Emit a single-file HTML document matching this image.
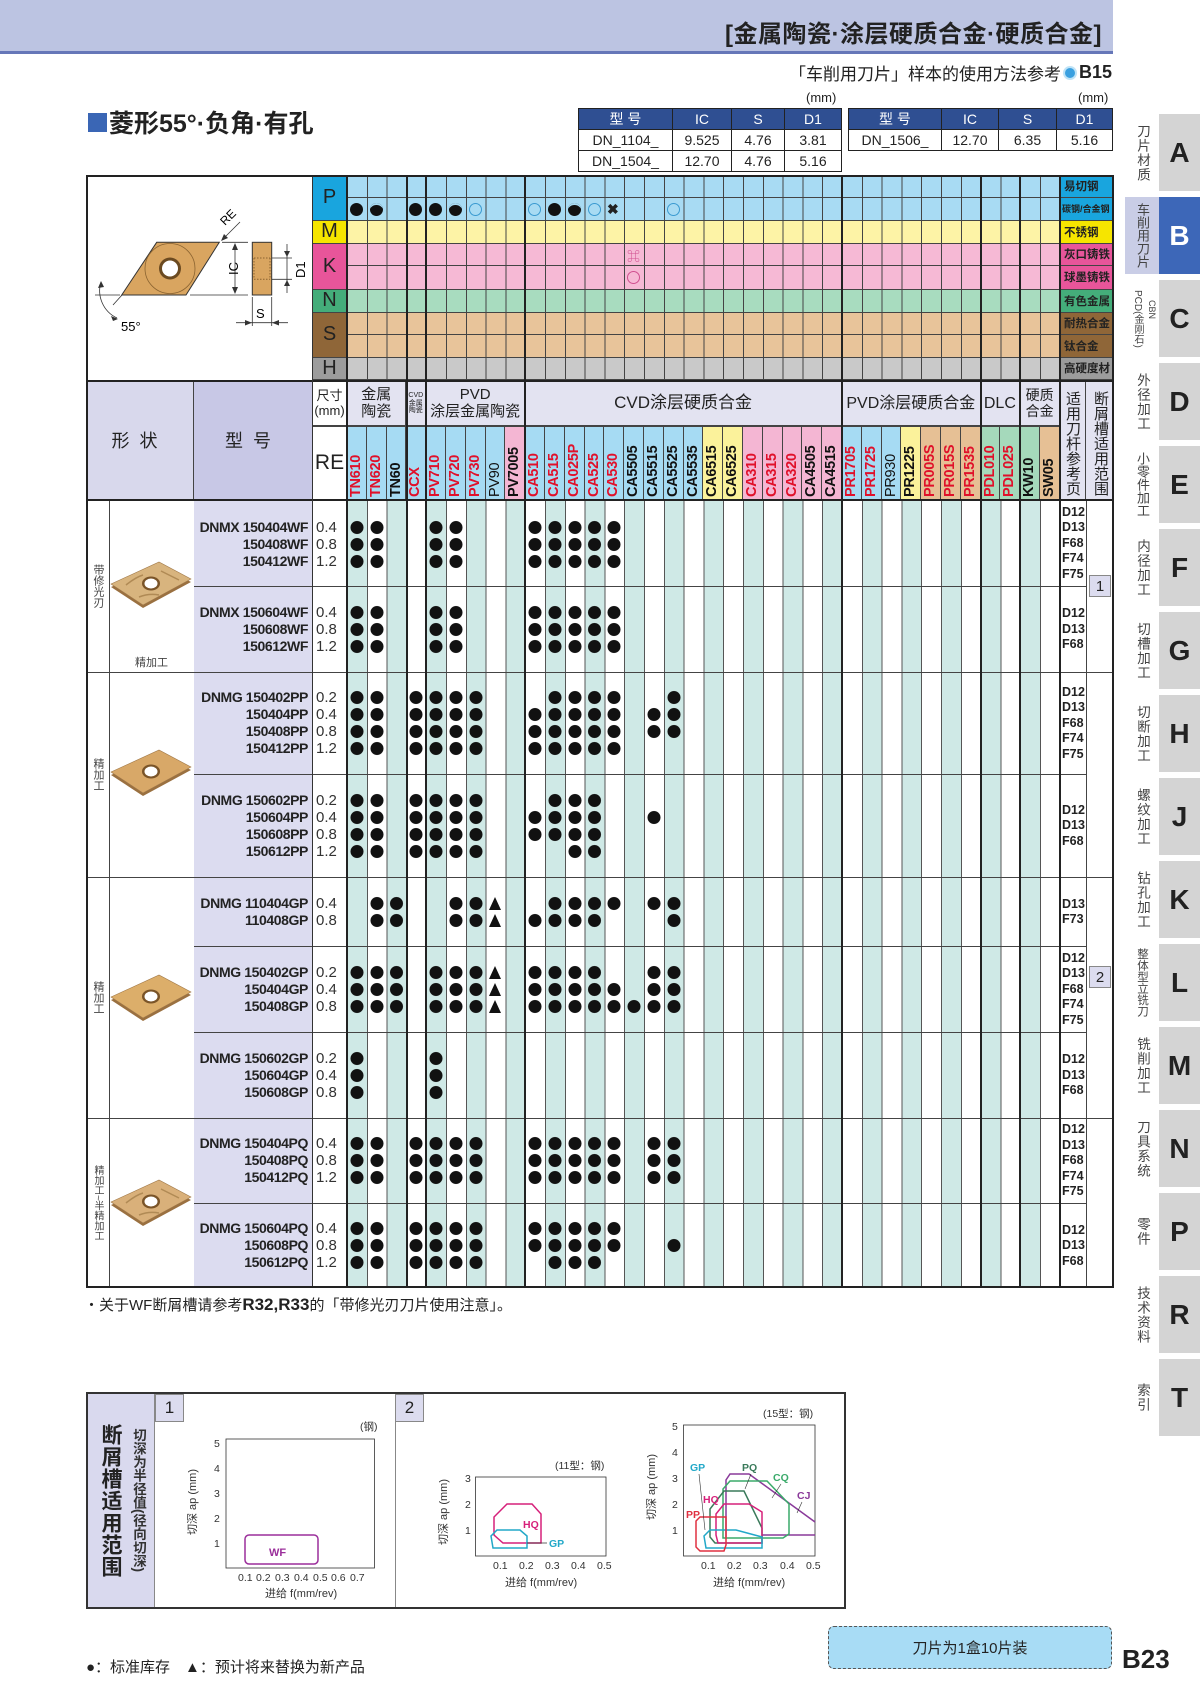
<!DOCTYPE html>
<html><head><meta charset="utf-8">
<style>
*{margin:0;padding:0;box-sizing:border-box}
body{width:1200px;height:1697px;background:#fff;font-family:"Liberation Sans","Noto Sans CJK SC",sans-serif;color:#222;position:relative;overflow:hidden}
.a{position:absolute}
.band{left:0;top:0;width:1113px;height:54px;background:#bcc4e2;border-bottom:3px solid #6677b8}
.dt{border-collapse:collapse;font-size:14px;text-align:center;font-family:"Liberation Sans Narrow","Liberation Sans","Noto Sans CJK SC",sans-serif}
.dt td,.dt th{border:1px solid #222;height:21px;padding:0}
.dt th{background:#2f4f92;color:#fff;font-weight:normal}
.mr{left:347px;width:713px;border-bottom:1px solid #444;background-image:repeating-linear-gradient(90deg,#444 0 1px,transparent 1px 19.8px)}
.ml{left:1060px;width:54px;font-size:11.5px;font-weight:bold;padding-left:4px;display:flex;align-items:center;border-bottom:1px solid #444}
.ll{left:313px;width:34px;font-size:20px;display:flex;align-items:center;justify-content:center;border-bottom:1px solid #444;border-right:1px solid #222}
.vl{width:2px;background:#222}
.nm{top:426px;height:74px;width:19.8px;border-right:1px solid #444;overflow:hidden}
.nm span{position:absolute;left:0;top:71px;width:68px;height:19.8px;line-height:19.8px;transform-origin:0 0;transform:rotate(-90deg);white-space:nowrap;font-weight:bold;font-size:14.5px;letter-spacing:-0.3px}
.r span{color:#e0102a}.k span{color:#111}
.gh{top:382px;height:44px;background:#e3e3f1;border-right:1px solid #444;border-bottom:1px solid #444;display:flex;align-items:center;justify-content:center;text-align:center;line-height:1.1}
.blk{position:absolute;left:194px;display:flex}
.mdl{width:114px;text-align:right;font-weight:bold;font-size:14px;line-height:17px;letter-spacing:-0.4px}
.re{width:39px;padding-left:8px;font-size:15px;line-height:17px;color:#333}
.dots{display:flex;flex-direction:column}
.dots div{display:flex;height:17px}
.dots b,.dots u,.dots s{display:block;width:19.8px;height:17px;text-decoration:none}
.dots b{background:radial-gradient(circle at 50% 50%,#111 6.2px,transparent 6.8px)}
.dots s{position:relative}
.dots s:after{content:"";position:absolute;left:3.5px;top:2px;border-left:6.5px solid transparent;border-right:6.5px solid transparent;border-bottom:13px solid #111}
.ref{left:1060px;width:26px;font-weight:bold;font-size:12.5px;line-height:15.5px;display:flex;flex-direction:column;justify-content:center;text-align:left;padding-left:2px}
.hl{height:1px;background:#444}
.tab{left:1159px;width:41px;height:77px;background:#d4d4d4;font-weight:bold;font-size:28px;display:flex;align-items:center;justify-content:center}
.tt{left:1125px;width:34px;height:77px;writing-mode:vertical-rl;font-size:13.5px;color:#444;text-align:center;line-height:34px;letter-spacing:1px;white-space:nowrap}
.sl{left:86px;width:23px;writing-mode:vertical-rl;font-size:11px;color:#444;text-align:center;line-height:23px;white-space:nowrap}
.pi{width:13px;height:13px;border-radius:50%;top:203px}
.cb{width:22px;height:22px;background:#dcdcef;border:1px solid #888;font-size:15px;display:flex;align-items:center;justify-content:center}
.vh{top:382px;height:118px;background:#e3e3f1;writing-mode:vertical-rl;font-size:15px;line-height:1;text-align:center;white-space:nowrap;padding-right:5px}
svg text{font-family:"Liberation Sans","Noto Sans CJK SC",sans-serif}
</style></head><body>

<div class="a band"></div>
<div class="a" style="right:98px;top:14px;font-size:24px;font-weight:bold;color:#222;letter-spacing:0.5px">[金属陶瓷·涂层硬质合金·硬质合金]</div>
<div class="a" style="right:88px;top:60px;font-size:17px;display:flex;align-items:center">「车削用刀片」样本的使用方法参考<span style="display:inline-block;width:14px;height:14px;border-radius:50%;background:#3aa0e0;border:2px solid #bfe3f7;margin:0 2px"></span><b style="font-size:18px">B15</b></div>

<div class="a" style="left:88px;top:104px;font-size:25px;font-weight:bold;display:flex;align-items:center"><span style="display:inline-block;width:19px;height:19px;background:#3a66b5;margin-right:2px"></span>菱形55°·负角·有孔</div>

<div class="a" style="left:806px;top:90px;font-size:13px">(mm)</div>
<div class="a" style="left:1078px;top:90px;font-size:13px">(mm)</div>
<table class="a dt" style="left:578px;top:108px;width:264px">
<tr><th style="width:94px">型 号</th><th style="width:59px">IC</th><th style="width:53px">S</th><th>D1</th></tr>
<tr><td>DN_1104_</td><td>9.525</td><td>4.76</td><td>3.81</td></tr>
<tr><td>DN_1504_</td><td>12.70</td><td>4.76</td><td>5.16</td></tr>
</table>
<table class="a dt" style="left:848px;top:108px;width:265px">
<tr><th style="width:93px">型 号</th><th style="width:57px">IC</th><th style="width:58px">S</th><th>D1</th></tr>
<tr><td>DN_1506_</td><td>12.70</td><td>6.35</td><td>5.16</td></tr>
</table>

<!-- drawing -->
<svg class="a" style="left:86px;top:175px" width="227" height="205" viewBox="86 175 227 205">
<polygon points="121.7,295 156.7,242.3 219.3,242.3 186,295" fill="#d9a560" stroke="#333" stroke-width="1"/>
<circle cx="170" cy="268.5" r="25" fill="none" stroke="#8a6330" stroke-width="0.8"/>
<circle cx="170" cy="268.5" r="11" fill="#6b4a20"/>
<circle cx="170" cy="268.5" r="8" fill="#fff"/>
<line x1="222" y1="242.3" x2="248" y2="242.3" stroke="#333" stroke-width="0.8"/>
<line x1="190" y1="295" x2="248" y2="295" stroke="#333" stroke-width="0.8"/>
<line x1="235" y1="244" x2="235" y2="293" stroke="#333" stroke-width="0.8"/>
<polygon points="235,243 232,250 238,250" fill="#333"/><polygon points="235,294 232,287 238,287" fill="#333"/>
<text x="0" y="0" font-size="13" transform="translate(238,275) rotate(-90)">IC</text>
<line x1="222" y1="240" x2="240" y2="222" stroke="#333" stroke-width="0.8"/>
<polygon points="221,241 224,234 228,238" fill="#333"/>
<text font-size="12" transform="translate(225,226) rotate(-45)">RE</text>
<rect x="252.3" y="242.3" width="19.4" height="52.7" fill="#d9a560" stroke="#333" stroke-width="1"/>
<line x1="254" y1="258" x2="270" y2="258" stroke="#8a6330" stroke-dasharray="1.5,1.5"/>
<line x1="254" y1="279.3" x2="270" y2="279.3" stroke="#8a6330" stroke-dasharray="1.5,1.5"/>
<line x1="254" y1="258" x2="254" y2="279" stroke="#8a6330" stroke-dasharray="1.5,1.5"/>
<line x1="270" y1="258" x2="270" y2="279" stroke="#8a6330" stroke-dasharray="1.5,1.5"/>
<line x1="272" y1="258" x2="292" y2="258" stroke="#333" stroke-width="0.8"/>
<line x1="272" y1="279.3" x2="292" y2="279.3" stroke="#333" stroke-width="0.8"/>
<line x1="287" y1="244" x2="287" y2="293" stroke="#333" stroke-width="0.8"/>
<polygon points="287,257 284,251 290,251" fill="#333"/><polygon points="287,280 284,286 290,286" fill="#333"/>
<text font-size="13" transform="translate(305,278) rotate(-90)">D1</text>
<line x1="252.3" y1="297" x2="252.3" y2="326" stroke="#333" stroke-width="0.8"/>
<line x1="271.7" y1="297" x2="271.7" y2="326" stroke="#333" stroke-width="0.8"/>
<line x1="236" y1="322.7" x2="288" y2="322.7" stroke="#333" stroke-width="0.8"/>
<polygon points="252,322.7 245,320 245,325.5" fill="#333"/><polygon points="272,322.7 279,320 279,325.5" fill="#333"/>
<text x="256" y="318" font-size="13">S</text>
<line x1="95" y1="295" x2="120" y2="295" stroke="#333" stroke-width="0.8"/>
<path d="M101,282 A30,30 0 0 0 117,318" fill="none" stroke="#333" stroke-width="0.8"/>
<line x1="113" y1="305" x2="122" y2="295" stroke="#333" stroke-width="0.8"/>
<polygon points="101,281 98,288 104,287" fill="#333"/><polygon points="118,319 111,316 113,321" fill="#333"/>
<text x="121" y="331" font-size="13">55°</text>
</svg>

<!-- material rows -->
<div class="a mr" style="top:175px;height:22.5px;background-color:#a8dbf3"></div>
<div class="a mr" style="top:197.5px;height:23px;background-color:#a8dbf3"></div>
<div class="a mr" style="top:220.5px;height:23px;background-color:#fdf3a6"></div>
<div class="a mr" style="top:243.5px;height:22.5px;background-color:#f6b9d5"></div>
<div class="a mr" style="top:266px;height:23.5px;background-color:#f6b9d5"></div>
<div class="a mr" style="top:289.5px;height:23px;background-color:#a8dcbf"></div>
<div class="a mr" style="top:312.5px;height:22.5px;background-color:#e8c49a"></div>
<div class="a mr" style="top:335px;height:22.5px;background-color:#e8c49a"></div>
<div class="a mr" style="top:357.5px;height:22.5px;background-color:#c9c9c9"></div>

<div class="a ml" style="top:175px;height:22.5px;background:#19a5de">易切钢</div>
<div class="a ml" style="top:197.5px;height:23px;background:#19a5de;font-size:9px;padding-left:2px">碳钢/合金钢</div>
<div class="a ml" style="top:220.5px;height:23px;background:#f6e500">不锈钢</div>
<div class="a ml" style="top:243.5px;height:22.5px;background:#e8559a">灰口铸铁</div>
<div class="a ml" style="top:266px;height:23.5px;background:#e8559a">球墨铸铁</div>
<div class="a ml" style="top:289.5px;height:23px;background:#44ad7a">有色金属</div>
<div class="a ml" style="top:312.5px;height:22.5px;background:#8f6638">耐热合金</div>
<div class="a ml" style="top:335px;height:22.5px;background:#8f6638">钛合金</div>
<div class="a ml" style="top:357.5px;height:22.5px;background:#9c9c9c">高硬度材</div>

<div class="a ll" style="top:175px;height:45.5px;background:#19a5de">P</div>
<div class="a ll" style="top:220.5px;height:23px;background:#f6e500">M</div>
<div class="a ll" style="top:243.5px;height:46px;background:#e8559a">K</div>
<div class="a ll" style="top:289.5px;height:23px;background:#44ad7a">N</div>
<div class="a ll" style="top:312.5px;height:45px;background:#8f6638">S</div>
<div class="a ll" style="top:357.5px;height:22.5px;background:#9c9c9c">H</div>

<!-- P row icons -->
<div class="a pi" style="left:350px;background:#111"></div>
<div class="a pi" style="left:370px;background:#111;box-shadow:inset 0 3px 0 -1px #a8dbf3"></div>
<div class="a pi" style="left:409px;background:#111"></div>
<div class="a pi" style="left:429px;background:#111"></div>
<div class="a pi" style="left:449px;background:#111;box-shadow:inset 0 3px 0 -1px #a8dbf3"></div>
<div class="a pi" style="left:469px;border:1px solid #3a9ad0"></div>
<div class="a pi" style="left:528px;border:1px solid #3a9ad0"></div>
<div class="a pi" style="left:548px;background:#111"></div>
<div class="a pi" style="left:568px;background:#111;box-shadow:inset 0 3px 0 -1px #a8dbf3"></div>
<div class="a pi" style="left:588px;border:1px solid #3a9ad0"></div>
<div class="a" style="left:607px;top:201px;font-size:14px;font-weight:bold">✖</div>
<div class="a pi" style="left:667px;border:1px solid #3a9ad0"></div>
<div class="a" style="left:627px;top:246px;font-size:13px;color:#d05090">⌘</div>
<div class="a pi" style="left:627px;top:271px;border:1px solid #d05090"></div>

<!-- lower header -->
<div class="a" style="left:86px;top:380px;width:108px;height:120px;background:#d8d8ec;border-right:1px solid #444;display:flex;align-items:center;justify-content:center;font-size:18px;letter-spacing:10px">形状</div>
<div class="a" style="left:194px;top:380px;width:119px;height:120px;background:#c8c8e6;border-right:1px solid #444;display:flex;align-items:center;justify-content:center;font-size:18px;letter-spacing:10px">型号</div>
<div class="a gh" style="left:313px;width:34px;font-size:13px;background:#fff">尺寸<br>(mm)</div>
<div class="a" style="left:313px;top:426px;width:34px;height:74px;border-right:1px solid #444;display:flex;align-items:center;justify-content:center;font-size:21px">RE</div>
<div class="a gh" style="left:347px;width:59.4px;font-size:15px">金属<br>陶瓷</div>
<div class="a gh" style="left:406.4px;width:19.8px;font-size:7px">CVD<br>金属<br>陶瓷</div>
<div class="a gh" style="left:426.2px;width:99px;font-size:15px">PVD<br>涂层金属陶瓷</div>
<div class="a gh" style="left:525.2px;width:316.8px;font-size:17px">CVD涂层硬质合金</div>
<div class="a gh" style="left:842px;width:138.6px;font-size:16px">PVD涂层硬质合金</div>
<div class="a gh" style="left:980.6px;width:39.6px;font-size:16px">DLC</div>
<div class="a gh" style="left:1020.2px;width:39.8px;font-size:14px">硬质<br>合金</div>
<div class="a vh" style="left:1060px;width:26px;border-right:1px solid #444;padding-top:5px">适用刀杆参考页</div>
<div class="a vh" style="left:1086px;width:28px;padding-top:5px;padding-right:6px">断屑槽适用范围</div>

<div class="a nm r" style="left:347px;background:#a6dbf3"><span>TN610</span></div>
<div class="a nm r" style="left:366.8px;background:#a6dbf3"><span>TN620</span></div>
<div class="a nm k" style="left:386.6px;background:#a6dbf3"><span>TN60</span></div>
<div class="a nm r" style="left:406.4px;background:#a6dbf3"><span>CCX</span></div>
<div class="a nm r" style="left:426.2px;background:#a6dbf3"><span>PV710</span></div>
<div class="a nm r" style="left:446px;background:#a6dbf3"><span>PV720</span></div>
<div class="a nm r" style="left:465.8px;background:#a6dbf3"><span>PV730</span></div>
<div class="a nm k" style="left:485.6px;background:#a6dbf3"><span style="font-weight:normal">PV90</span></div>
<div class="a nm k" style="left:505.4px;background:#f4b6d3"><span>PV7005</span></div>
<div class="a nm r" style="left:525.2px;background:#a6dbf3"><span>CA510</span></div>
<div class="a nm r" style="left:545px;background:#a6dbf3"><span>CA515</span></div>
<div class="a nm r" style="left:564.8px;background:#a6dbf3"><span>CA025P</span></div>
<div class="a nm r" style="left:584.6px;background:#a6dbf3"><span>CA525</span></div>
<div class="a nm r" style="left:604.4px;background:#a6dbf3"><span>CA530</span></div>
<div class="a nm k" style="left:624.2px;background:#a6dbf3"><span>CA5505</span></div>
<div class="a nm k" style="left:644px;background:#a6dbf3"><span>CA5515</span></div>
<div class="a nm k" style="left:663.8px;background:#a6dbf3"><span>CA5525</span></div>
<div class="a nm k" style="left:683.6px;background:#a6dbf3"><span>CA5535</span></div>
<div class="a nm k" style="left:703.4px;background:#fbf29b"><span>CA6515</span></div>
<div class="a nm k" style="left:723.2px;background:#fbf29b"><span>CA6525</span></div>
<div class="a nm r" style="left:743px;background:#f4b6d3"><span>CA310</span></div>
<div class="a nm r" style="left:762.8px;background:#f4b6d3"><span>CA315</span></div>
<div class="a nm r" style="left:782.6px;background:#f4b6d3"><span>CA320</span></div>
<div class="a nm k" style="left:802.4px;background:#f4b6d3"><span>CA4505</span></div>
<div class="a nm k" style="left:822.2px;background:#f4b6d3"><span>CA4515</span></div>
<div class="a nm r" style="left:842px;background:#a6dbf3"><span>PR1705</span></div>
<div class="a nm r" style="left:861.8px;background:#a6dbf3"><span>PR1725</span></div>
<div class="a nm k" style="left:881.6px;background:#a6dbf3"><span style="font-weight:normal">PR930</span></div>
<div class="a nm k" style="left:901.4px;background:#fbf29b"><span>PR1225</span></div>
<div class="a nm r" style="left:921.2px;background:#e6c095"><span>PR005S</span></div>
<div class="a nm r" style="left:941px;background:#e6c095"><span>PR015S</span></div>
<div class="a nm r" style="left:960.8px;background:#e6c095"><span>PR1535</span></div>
<div class="a nm r" style="left:980.6px;background:#a5d9bb"><span>PDL010</span></div>
<div class="a nm r" style="left:1000.4px;background:#a5d9bb"><span>PDL025</span></div>
<div class="a nm k" style="left:1020.2px;background:#a5d9bb"><span>KW10</span></div>
<div class="a nm k" style="left:1040px;background:#e6c095"><span>SW05</span></div>

<!-- body -->
<div class="a" style="left:347px;top:500px;width:713px;height:788px;background-image:repeating-linear-gradient(90deg,#555 0 1px,transparent 1px 19.8px),repeating-linear-gradient(90deg,#cfe9e6 0 19.8px,#fff 19.8px 39.6px)"></div>
<div class="a" style="left:194px;top:500px;width:119px;height:788px;background:#dcdcf0;border-right:1px solid #444"></div>
<div class="a" style="left:313px;top:500px;width:34px;height:788px;border-right:1px solid #444"></div>
<div class="a" style="left:109px;top:500px;width:1px;height:788px;background:#444"></div>
<div class="a" style="left:1086px;top:500px;width:1px;height:788px;background:#444"></div>
<div class="a" style="left:1059px;top:500px;width:1px;height:788px;background:#444"></div>

<!-- horizontal lines -->
<div class="a hl" style="left:86px;top:380px;width:1028px;height:2px;background:#222"></div>
<div class="a hl" style="left:313px;top:426px;width:747px"></div>
<div class="a hl" style="left:86px;top:499px;width:1028px;height:2px;background:#222"></div>
<div class="a hl" style="left:86px;top:672px;width:1028px"></div>
<div class="a hl" style="left:86px;top:877px;width:1028px"></div>
<div class="a hl" style="left:86px;top:1118px;width:1028px"></div>
<div class="a hl" style="left:194px;top:586px;width:892px"></div>
<div class="a hl" style="left:194px;top:774px;width:892px"></div>
<div class="a hl" style="left:194px;top:946px;width:892px"></div>
<div class="a hl" style="left:194px;top:1032px;width:892px"></div>
<div class="a hl" style="left:194px;top:1203px;width:892px"></div>

<!-- group vertical lines -->
<div class="a vl" style="left:312px;top:175px;height:1113px;width:1px;background:#333"></div>
<div class="a vl" style="left:346px;top:175px;height:1113px"></div>
<div class="a vl" style="left:405.5px;top:175px;height:1113px"></div>
<div class="a vl" style="left:425.3px;top:175px;height:1113px"></div>
<div class="a vl" style="left:524.3px;top:175px;height:1113px"></div>
<div class="a vl" style="left:841px;top:175px;height:1113px"></div>
<div class="a vl" style="left:979.7px;top:175px;height:1113px"></div>
<div class="a vl" style="left:1019.3px;top:175px;height:1113px"></div>
<div class="a vl" style="left:1058.5px;top:175px;height:1113px"></div>

<!-- outer border -->
<div class="a" style="left:86px;top:175px;width:1028px;height:1113px;border:2px solid #222"></div>

<!-- side labels -->
<div class="a sl" style="top:502px;height:168px">带修光刃</div>
<div class="a sl" style="top:674px;height:201px">精加工</div>
<div class="a sl" style="top:879px;height:237px">精加工</div>
<div class="a sl" style="top:1120px;height:166px;font-size:10px">精加工~半精加工</div>
<div class="a" style="left:135px;top:654px;font-size:11px;color:#444">精加工</div>

<!-- inserts -->
<svg class="a" style="left:108px;top:555px" width="86" height="60" viewBox="-43 -30 86 60">
<polygon points="-40,2 8,-20 40,-3 -8,23" fill="#9a7040"/>
<polygon points="-40,-1 8,-23 40,-6 -8,20" fill="#d8b47e" stroke="#a07848" stroke-width="0.6"/>
<ellipse cx="0" cy="-1.5" rx="9" ry="7" fill="#7a5428"/><ellipse cx="0" cy="-1.5" rx="6.5" ry="5" fill="#fff"/>
<path d="M-25,0 Q-15,-8 -8,-10 M10,-14 Q18,-10 28,-5 M-12,12 Q-2,8 8,10" stroke="#b08a55" fill="none" stroke-width="1.5"/>
</svg>
<svg class="a" style="left:108px;top:743px" width="86" height="60" viewBox="-43 -30 86 60">
<polygon points="-40,2 8,-20 40,-3 -8,23" fill="#9a7040"/>
<polygon points="-40,-1 8,-23 40,-6 -8,20" fill="#d8a868" stroke="#a07848" stroke-width="0.6"/>
<ellipse cx="0" cy="-1.5" rx="9" ry="7" fill="#7a5428"/><ellipse cx="0" cy="-1.5" rx="6.5" ry="5" fill="#fff"/>
</svg>
<svg class="a" style="left:108px;top:968px" width="86" height="60" viewBox="-43 -30 86 60">
<polygon points="-40,2 8,-20 40,-3 -8,23" fill="#9a7040"/>
<polygon points="-40,-1 8,-23 40,-6 -8,20" fill="#dcae6a" stroke="#a07848" stroke-width="0.6"/>
<ellipse cx="0" cy="-1.5" rx="9" ry="7" fill="#7a5428"/><ellipse cx="0" cy="-1.5" rx="6.5" ry="5" fill="#fff"/>
</svg>
<svg class="a" style="left:108px;top:1173px" width="86" height="60" viewBox="-43 -30 86 60">
<polygon points="-40,2 8,-20 40,-3 -8,23" fill="#9a7040"/>
<polygon points="-40,-1 8,-23 40,-6 -8,20" fill="#d9b07a" stroke="#a07848" stroke-width="0.6"/>
<ellipse cx="0" cy="-1.5" rx="9" ry="7" fill="#7a5428"/><ellipse cx="0" cy="-1.5" rx="6.5" ry="5" fill="#fff"/>
<path d="M-25,0 Q-15,-8 -8,-10 M10,-14 Q18,-10 28,-5 M-12,12 Q-2,8 8,10" stroke="#b08a55" fill="none" stroke-width="1.5"/>
</svg>

<!-- data blocks -->
<div class="blk" style="top:518.5px"><div class="mdl">DNMX 150404WF<br>150408WF<br>150412WF</div><div class="re">0.4<br>0.8<br>1.2</div><div class="dots">
<div><b></b><b></b><u></u><u></u><b></b><b></b><u></u><u></u><u></u><b></b><b></b><b></b><b></b><b></b></div>
<div><b></b><b></b><u></u><u></u><b></b><b></b><u></u><u></u><u></u><b></b><b></b><b></b><b></b><b></b></div>
<div><b></b><b></b><u></u><u></u><b></b><b></b><u></u><u></u><u></u><b></b><b></b><b></b><b></b><b></b></div></div></div>

<div class="blk" style="top:603.5px"><div class="mdl">DNMX 150604WF<br>150608WF<br>150612WF</div><div class="re">0.4<br>0.8<br>1.2</div><div class="dots">
<div><b></b><b></b><u></u><u></u><b></b><b></b><u></u><u></u><u></u><b></b><b></b><b></b><b></b><b></b></div>
<div><b></b><b></b><u></u><u></u><b></b><b></b><u></u><u></u><u></u><b></b><b></b><b></b><b></b><b></b></div>
<div><b></b><b></b><u></u><u></u><b></b><b></b><u></u><u></u><u></u><b></b><b></b><b></b><b></b><b></b></div></div></div>

<div class="blk" style="top:688.5px"><div class="mdl">DNMG 150402PP<br>150404PP<br>150408PP<br>150412PP</div><div class="re">0.2<br>0.4<br>0.8<br>1.2</div><div class="dots">
<div><b></b><b></b><u></u><b></b><b></b><b></b><b></b><u></u><u></u><u></u><b></b><b></b><b></b><b></b><u></u><u></u><b></b></div>
<div><b></b><b></b><u></u><b></b><b></b><b></b><b></b><u></u><u></u><b></b><b></b><b></b><b></b><b></b><u></u><b></b><b></b></div>
<div><b></b><b></b><u></u><b></b><b></b><b></b><b></b><u></u><u></u><b></b><b></b><b></b><b></b><b></b><u></u><b></b><b></b></div>
<div><b></b><b></b><u></u><b></b><b></b><b></b><b></b><u></u><u></u><b></b><b></b><b></b><b></b><b></b></div></div></div>

<div class="blk" style="top:791.5px"><div class="mdl">DNMG 150602PP<br>150604PP<br>150608PP<br>150612PP</div><div class="re">0.2<br>0.4<br>0.8<br>1.2</div><div class="dots">
<div><b></b><b></b><u></u><b></b><b></b><b></b><b></b><u></u><u></u><u></u><b></b><b></b><b></b></div>
<div><b></b><b></b><u></u><b></b><b></b><b></b><b></b><u></u><u></u><b></b><b></b><b></b><b></b><u></u><u></u><b></b></div>
<div><b></b><b></b><u></u><b></b><b></b><b></b><b></b><u></u><u></u><b></b><b></b><b></b><b></b></div>
<div><b></b><b></b><u></u><b></b><b></b><b></b><b></b><u></u><u></u><u></u><u></u><b></b><b></b></div></div></div>

<div class="blk" style="top:894.5px"><div class="mdl">DNMG 110404GP<br>110408GP</div><div class="re">0.4<br>0.8</div><div class="dots">
<div><u></u><b></b><b></b><u></u><u></u><b></b><b></b><s></s><u></u><u></u><b></b><b></b><b></b><b></b><u></u><b></b><b></b></div>
<div><u></u><b></b><b></b><u></u><u></u><b></b><b></b><s></s><u></u><b></b><b></b><b></b><b></b><u></u><u></u><u></u><b></b></div></div></div>

<div class="blk" style="top:963.5px"><div class="mdl">DNMG 150402GP<br>150404GP<br>150408GP</div><div class="re">0.2<br>0.4<br>0.8</div><div class="dots">
<div><b></b><b></b><b></b><u></u><b></b><b></b><b></b><s></s><u></u><b></b><b></b><b></b><b></b><u></u><u></u><b></b><b></b></div>
<div><b></b><b></b><b></b><u></u><b></b><b></b><b></b><s></s><u></u><b></b><b></b><b></b><b></b><b></b><u></u><b></b><b></b></div>
<div><b></b><b></b><b></b><u></u><b></b><b></b><b></b><s></s><u></u><b></b><b></b><b></b><b></b><b></b><b></b><b></b><b></b></div></div></div>

<div class="blk" style="top:1049.5px"><div class="mdl">DNMG 150602GP<br>150604GP<br>150608GP</div><div class="re">0.2<br>0.4<br>0.8</div><div class="dots">
<div><b></b><u></u><u></u><u></u><b></b></div>
<div><b></b><u></u><u></u><u></u><b></b></div>
<div><b></b><u></u><u></u><u></u><b></b></div></div></div>

<div class="blk" style="top:1135px"><div class="mdl">DNMG 150404PQ<br>150408PQ<br>150412PQ</div><div class="re">0.4<br>0.8<br>1.2</div><div class="dots">
<div><b></b><b></b><u></u><b></b><b></b><b></b><b></b><u></u><u></u><b></b><b></b><b></b><b></b><b></b><u></u><b></b><b></b></div>
<div><b></b><b></b><u></u><b></b><b></b><b></b><b></b><u></u><u></u><b></b><b></b><b></b><b></b><b></b><u></u><b></b><b></b></div>
<div><b></b><b></b><u></u><b></b><b></b><b></b><b></b><u></u><u></u><b></b><b></b><b></b><b></b><b></b><u></u><b></b><b></b></div></div></div>

<div class="blk" style="top:1220px"><div class="mdl">DNMG 150604PQ<br>150608PQ<br>150612PQ</div><div class="re">0.4<br>0.8<br>1.2</div><div class="dots">
<div><b></b><b></b><u></u><b></b><b></b><b></b><b></b><u></u><u></u><b></b><b></b><b></b><b></b><b></b></div>
<div><b></b><b></b><u></u><b></b><b></b><b></b><b></b><u></u><u></u><b></b><b></b><b></b><b></b><b></b><u></u><u></u><b></b></div>
<div><b></b><b></b><u></u><b></b><b></b><b></b><b></b><u></u><u></u><u></u><b></b><b></b><b></b></div></div></div>

<!-- refs -->
<div class="a ref" style="top:501px;height:85px">D12<br>D13<br>F68<br>F74<br>F75</div>
<div class="a ref" style="top:587px;height:85px">D12<br>D13<br>F68</div>
<div class="a ref" style="top:673px;height:101px">D12<br>D13<br>F68<br>F74<br>F75</div>
<div class="a ref" style="top:775px;height:102px">D12<br>D13<br>F68</div>
<div class="a ref" style="top:878px;height:68px">D13<br>F73</div>
<div class="a ref" style="top:947px;height:85px">D12<br>D13<br>F68<br>F74<br>F75</div>
<div class="a ref" style="top:1033px;height:85px">D12<br>D13<br>F68</div>
<div class="a ref" style="top:1119px;height:84px">D12<br>D13<br>F68<br>F74<br>F75</div>
<div class="a ref" style="top:1204px;height:84px">D12<br>D13<br>F68</div>
<div class="a cb" style="left:1089px;top:575px">1</div>
<div class="a cb" style="left:1089px;top:966px">2</div>

<div class="a" style="left:84px;top:1294px;font-size:15px">・关于WF断屑槽请参考<b style="font-size:17px">R32,R33</b>的「带修光刃刀片使用注意」。</div>

<!-- chart box -->
<div class="a" style="left:86px;top:1392px;width:760px;height:217px;border:2px solid #333"></div>
<div class="a" style="left:88px;top:1394px;width:67px;height:213px;background:#d9d9ee;border-right:1px solid #888"></div>
<div class="a" style="left:95px;top:1398px;width:30px;height:205px;writing-mode:vertical-rl;font-size:21px;font-weight:bold;text-align:center;line-height:30px;letter-spacing:1px;white-space:nowrap">断屑槽适用范围</div>
<div class="a" style="left:127px;top:1400px;width:22px;height:200px;writing-mode:vertical-rl;font-size:13.5px;font-weight:bold;color:#333;text-align:center;line-height:22px;white-space:nowrap">切深为半径值(径向切深)</div>
<div class="a" style="left:395px;top:1394px;width:1px;height:213px;background:#888"></div>
<div class="a cb" style="left:155px;top:1394px;width:29px;height:28px;font-size:17px;border-color:#888">1</div>
<div class="a cb" style="left:395px;top:1394px;width:29px;height:28px;font-size:17px;border-color:#888">2</div>

<svg class="a" style="left:0;top:1380px" width="860" height="240" viewBox="0 1380 860 240">
<g font-size="10.5" fill="#333">
<rect x="226" y="1439" width="148.5" height="129" fill="none" stroke="#333" stroke-width="0.8"/>
<text x="214" y="1547">1</text><text x="214" y="1522">2</text><text x="214" y="1497">3</text><text x="214" y="1472">4</text><text x="214" y="1447">5</text>
<text x="238" y="1581">0.1</text><text x="256" y="1581">0.2</text><text x="275" y="1581">0.3</text><text x="294" y="1581">0.4</text><text x="313" y="1581">0.5</text><text x="331" y="1581">0.6</text><text x="350" y="1581">0.7</text>
<text x="265" y="1597" font-size="11">进给 f(mm/rev)</text>
<text x="360" y="1430">(钢)</text>
<text transform="translate(196,1535) rotate(-90)" font-size="11">切深 ap (mm)</text>
<rect x="245" y="1535" width="73" height="29" rx="4" fill="none" stroke="#9b2f9b" stroke-width="1.5"/>
<text x="269" y="1556" fill="#9b2f9b" font-weight="bold" font-size="11">WF</text>
<rect x="475.5" y="1477" width="130.5" height="79" fill="none" stroke="#333" stroke-width="0.8"/>
<text x="465" y="1482">3</text><text x="465" y="1508">2</text><text x="465" y="1534">1</text>
<text x="493" y="1569">0.1</text><text x="519" y="1569">0.2</text><text x="545" y="1569">0.3</text><text x="571" y="1569">0.4</text><text x="597" y="1569">0.5</text>
<text x="505" y="1586" font-size="11">进给 f(mm/rev)</text>
<text x="555" y="1469">(11型：钢)</text>
<text transform="translate(447,1545) rotate(-90)" font-size="11">切深 ap (mm)</text>
<path d="M503,1543 L541,1543 L541,1514 L532,1504 L507,1504 L494,1517 L494,1535 Z" fill="none" stroke="#d6207a" stroke-width="1.5"/>
<path d="M493,1548 L527,1548 L527,1536 L520,1530 L497,1530 L491,1536 Z" fill="none" stroke="#22a8c8" stroke-width="1.5"/>
<line x1="527" y1="1543" x2="547" y2="1543" stroke="#333" stroke-width="0.7"/>
<text x="523" y="1528" fill="#d6207a" font-weight="bold">HQ</text>
<text x="549" y="1547" fill="#22a8c8" font-weight="bold">GP</text>
<rect x="683.5" y="1425" width="131.5" height="131" fill="none" stroke="#333" stroke-width="0.8"/>
<text x="672" y="1430">5</text><text x="672" y="1456">4</text><text x="672" y="1482">3</text><text x="672" y="1508">2</text><text x="672" y="1534">1</text>
<text x="701" y="1569">0.1</text><text x="727" y="1569">0.2</text><text x="753" y="1569">0.3</text><text x="780" y="1569">0.4</text><text x="806" y="1569">0.5</text>
<text x="713" y="1586" font-size="11">进给 f(mm/rev)</text>
<text x="763" y="1417">(15型：钢)</text>
<text transform="translate(655,1520) rotate(-90)" font-size="11">切深 ap (mm)</text>
<path d="M726,1537 L726,1480 L730,1474 L749,1474 L815,1522 M762,1535 L815,1535" fill="none" stroke="#8a3a9a" stroke-width="1.5"/>
<path d="M723,1538 L783,1538 L789,1534 L789,1504 L767,1481 L730,1481 L723,1489 Z" fill="none" stroke="#3aaa6a" stroke-width="1.5"/>
<path d="M715,1543 L762,1543 L762,1528 L744,1491 L724,1491 L710,1509 L710,1537 Z" fill="none" stroke="#3a7a5a" stroke-width="1.5"/>
<path d="M718,1543 L762,1543 L762,1512 L749,1504 L724,1504 L716,1514 L716,1535 Z" fill="none" stroke="#d6207a" stroke-width="1.5"/>
<path d="M706,1548 L762,1548 L762,1537 L736,1530 L710,1530 L704,1536 Z" fill="none" stroke="#22a8c8" stroke-width="1.5"/>
<path d="M700,1551 L724,1551 L726,1545 L726,1517 L700,1517 L696,1521 L696,1547 Z" fill="none" stroke="#e03040" stroke-width="1.5"/>
<text x="690" y="1471" fill="#22a8c8" font-weight="bold">GP</text>
<text x="742" y="1471" fill="#3a7a5a" font-weight="bold">PQ</text>
<text x="773" y="1481" fill="#3aaa6a" font-weight="bold">CQ</text>
<text x="797" y="1499" fill="#8a3a9a" font-weight="bold">CJ</text>
<text x="703" y="1503" fill="#d6207a" font-weight="bold">HQ</text>
<text x="686" y="1518" fill="#e03040" font-weight="bold">PP</text>
<line x1="699" y1="1474" x2="705" y2="1530" stroke="#333" stroke-width="0.6"/>
<line x1="751" y1="1474" x2="745" y2="1489" stroke="#333" stroke-width="0.6"/>
<line x1="781" y1="1484" x2="772" y2="1498" stroke="#333" stroke-width="0.6"/>
<line x1="802" y1="1502" x2="797" y2="1513" stroke="#333" stroke-width="0.6"/>
</g>
</svg>

<div class="a" style="left:86px;top:1656px;font-size:15px">●：标准库存　▲：预计将来替换为新产品</div>
<div class="a" style="left:828px;top:1626px;width:284px;height:43px;background:#a8dcf5;border:1.5px dashed #555;border-radius:6px;display:flex;align-items:center;justify-content:center;font-size:15px">刀片为1盒10片装</div>
<div class="a" style="left:1122px;top:1644px;font-size:26px;font-weight:bold">B23</div>

<!-- tabs -->
<div class="a tt" style="top:114px">刀片材质</div><div class="a tab" style="top:114px">A</div>
<div class="a tt" style="top:197px;background:#c9cde6;font-size:13px;letter-spacing:0">车削用刀片</div><div class="a tab" style="top:197px;background:#3d67b8;color:#fff">B</div>
<div class="a tt" style="top:280px;font-size:10px;letter-spacing:0;line-height:24px;width:24px">PCD(金刚石)</div><div class="a" style="left:1147px;top:300px;writing-mode:vertical-rl;font-size:9px;color:#444;line-height:10px">CBN</div><div class="a tab" style="top:280px">C</div>
<div class="a tt" style="top:363px">外径加工</div><div class="a tab" style="top:363px">D</div>
<div class="a tt" style="top:446px;font-size:13px;letter-spacing:0">小零件加工</div><div class="a tab" style="top:446px">E</div>
<div class="a tt" style="top:529px">内径加工</div><div class="a tab" style="top:529px">F</div>
<div class="a tt" style="top:612px">切槽加工</div><div class="a tab" style="top:612px">G</div>
<div class="a tt" style="top:695px">切断加工</div><div class="a tab" style="top:695px">H</div>
<div class="a tt" style="top:778px">螺纹加工</div><div class="a tab" style="top:778px">J</div>
<div class="a tt" style="top:861px">钻孔加工</div><div class="a tab" style="top:861px">K</div>
<div class="a tt" style="top:944px;font-size:11.5px;letter-spacing:0">整体型立铣刀</div><div class="a tab" style="top:944px">L</div>
<div class="a tt" style="top:1027px">铣削加工</div><div class="a tab" style="top:1027px">M</div>
<div class="a tt" style="top:1110px">刀具系统</div><div class="a tab" style="top:1110px">N</div>
<div class="a tt" style="top:1193px">零件</div><div class="a tab" style="top:1193px">P</div>
<div class="a tt" style="top:1276px">技术资料</div><div class="a tab" style="top:1276px">R</div>
<div class="a tt" style="top:1359px">索引</div><div class="a tab" style="top:1359px">T</div>

</body></html>
